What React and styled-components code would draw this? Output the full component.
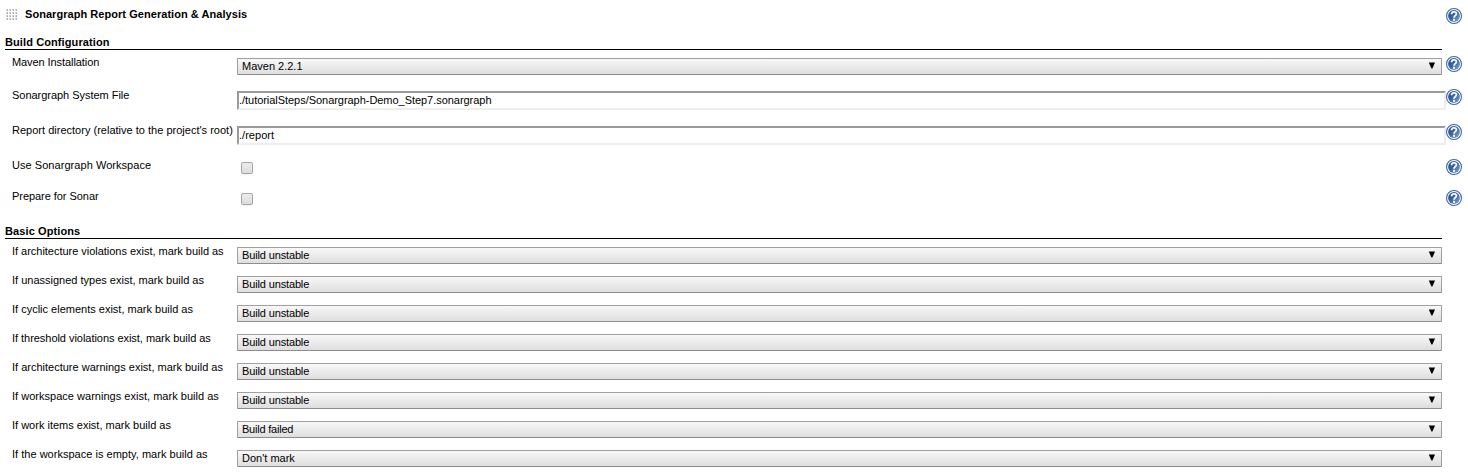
import React from "react";
import styled, { createGlobalStyle } from "styled-components";

const GlobalStyle = createGlobalStyle`
  * { box-sizing: border-box; }
  html, body { margin: 0; background: #fff; overflow: hidden; }
  body {
    font-family: "Liberation Sans", Arial, Helvetica, sans-serif;
    font-size: 11px;
    line-height: 13px;
    color: #000;
  }
`;

const Form = styled.main`
  width: 1468px;
  height: 473px;
  padding: 8px 6px 0 5px;
  overflow: hidden;
`;

const TitleBar = styled.header`
  display: flex;
  align-items: flex-start;
  height: 28px;
`;

const Grip = styled.svg`
  width: 12px;
  height: 12px;
  margin: 1px 7px 0 1px;
`;

const Title = styled.h1`
  flex: 1;
  margin: 0;
  font-size: 11px;
  font-weight: bold;
  letter-spacing: 0.05px;
`;

const SectionHeading = styled.h2`
  height: 14px;
  width: 1437px;
  margin: 0 0 6px;
  border-bottom: 1px solid #000;
  font-size: 11px;
  font-weight: bold;
  letter-spacing: 0.1px;
`;

const Section = styled.section`
  display: block;
`;

const Row = styled.div`
  display: grid;
  grid-template-columns: 225px 1209px 16px;
  padding-left: 7px;
  height: ${(p) => p.$height}px;
`;

const Label = styled.label`
  white-space: nowrap;
  letter-spacing: ${(p) => p.$tracking || 0}px;
`;

const SelectBox = styled.div`
  display: flex;
  align-items: center;
  justify-content: space-between;
  width: 1205px;
  height: 17px;
  margin-top: 2px;
  padding: 0 6px 0 4px;
  border: 1px solid #a0a0a0;
  border-bottom-color: #8c8c8c;
  border-radius: 1px;
  background: linear-gradient(#f8f8f8, #dedede);
`;

const SelectValue = styled.span`
  letter-spacing: ${(p) => p.$tracking || 0}px;
`;

const Arrow = styled.svg`
  width: 7px;
  height: 7px;
  margin-bottom: 2px;
`;

const TextInput = styled.input`
  width: 1209px;
  height: 19px;
  margin: 2px 0 0;
  padding: 0 0 1px;
  border: 2px solid;
  border-color: #9a9a9a #eee #eee #9a9a9a;
  border-radius: 0;
  outline: 0;
  background: #fff;
  color: #000;
  font: 11px "Liberation Sans", Arial, sans-serif;
  letter-spacing: ${(p) => p.$tracking || 0}px;
`;

const Checkbox = styled.input.attrs({ type: "checkbox" })`
  appearance: none;
  width: 12px;
  height: 12px;
  margin: 3px 0 0 4px;
  border: 1px solid #a6a6a6;
  border-radius: 2px;
  background: linear-gradient(#ececec, #dcdcdc);
  box-shadow: 0 1px 0 #f2f2f2;
`;

const HelpSvg = styled.svg`
  display: block;
  width: 16px;
  height: 16px;
`;

const HelpIcon = () => (
  <HelpSvg viewBox="0 0 16 16">
    <defs>
      <linearGradient id="help" x1="0" y1="0" x2="1" y2="1">
        <stop offset="0" stopColor="#1d4a8a" />
        <stop offset="0.5" stopColor="#3a69a6" />
        <stop offset="1" stopColor="#86abd6" />
      </linearGradient>
    </defs>
    <circle cx="8" cy="8" r="7.45" fill="#fff" stroke="#3c659f" strokeWidth="1.1" />
    <circle cx="8" cy="8" r="5.9" fill="url(#help)" />
    <path d="M5.6 6.2C5.5 3.2 10.4 3.2 10.4 5.8C10.4 7.6 8.1 7.6 8 9.7" fill="none" stroke="#fff" strokeWidth="1.8" />
    <rect x="7" y="10.8" width="2" height="2" fill="#fff" />
  </HelpSvg>
);

const GripDots = () => (
  <Grip viewBox="0 0 12 12" shapeRendering="crispEdges">
    {[0, 3, 6, 9].flatMap((y) =>
      [0, 3, 6, 9].map((x) => (
        <g key={`${x}-${y}`}>
          <rect x={x} y={y} width="2" height="2" fill="#d8d8d8" />
          <rect x={x + 1} y={y} width="1" height="1" fill="#bcbcbc" />
          <rect x={x + 1} y={y + 1} width="1" height="1" fill="#a8a8a8" />
        </g>
      ))
    )}
  </Grip>
);

const valueTracking = { "Build unstable": -0.14, "Build failed": -0.22 };

const Select = ({ value }) => (
  <SelectBox>
    <SelectValue $tracking={valueTracking[value]}>{value}</SelectValue>
    <Arrow viewBox="0 0 7 7">
      <path d="M0.8 0.4H7L4.4 6.6H3.4Z" fill="#000" />
    </Arrow>
  </SelectBox>
);

const controls = {
  select: (value) => <Select value={value} />,
  text: (value) => (
    <TextInput defaultValue={value} spellCheck={false} $tracking={value.length > 10 ? -0.04 : 0.03} />
  ),
  check: () => <Checkbox />,
};

const buildRows = [
  { label: "Maven Installation", kind: "select", value: "Maven 2.2.1", height: 33, tracking: -0.08 },
  { label: "Sonargraph System File", kind: "text", value: "./tutorialSteps/Sonargraph-Demo_Step7.sonargraph", height: 35, tracking: -0.03 },
  { label: "Report directory (relative to the project's root)", kind: "text", value: "./report", height: 35, tracking: 0.01 },
  { label: "Use Sonargraph Workspace", kind: "check", height: 31, tracking: 0.05 },
  { label: "Prepare for Sonar", kind: "check", height: 35, tracking: -0.05 },
];

const basicRows = [
  ["If architecture violations exist, mark build as", "Build unstable", -0.025],
  ["If unassigned types exist, mark build as", "Build unstable", 0],
  ["If cyclic elements exist, mark build as", "Build unstable", 0],
  ["If threshold violations exist, mark build as", "Build unstable", -0.04],
  ["If architecture warnings exist, mark build as", "Build unstable", 0],
  ["If workspace warnings exist, mark build as", "Build unstable", 0.02],
  ["If work items exist, mark build as", "Build failed", 0],
  ["If the workspace is empty, mark build as", "Don't mark", 0.02],
];

export default function App() {
  return (
    <>
      <GlobalStyle />
      <Form>
        <TitleBar>
          <GripDots />
          <Title>Sonargraph Report Generation &amp; Analysis</Title>
          <HelpIcon />
        </TitleBar>
        <Section>
          <SectionHeading>Build Configuration</SectionHeading>
          {buildRows.map((r) => (
            <Row key={r.label} $height={r.height}>
              <Label $tracking={r.tracking}>{r.label}</Label>
              <div>{controls[r.kind](r.value)}</div>
              <HelpIcon />
            </Row>
          ))}
        </Section>
        <Section>
          <SectionHeading>Basic Options</SectionHeading>
          {basicRows.map(([label, value, tracking]) => (
            <Row key={label} $height={29}>
              <Label $tracking={tracking}>{label}</Label>
              <Select value={value} />
            </Row>
          ))}
        </Section>
      </Form>
    </>
  );
}
